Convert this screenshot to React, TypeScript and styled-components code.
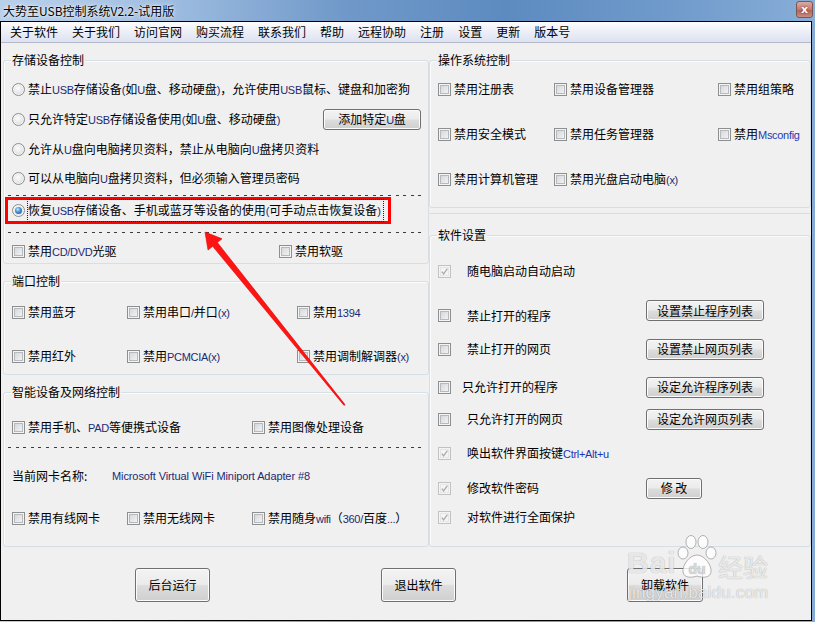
import React from "react";
import styled, { createGlobalStyle } from "styled-components";

const Global = createGlobalStyle`
  html, body { margin: 0; padding: 0; background: #7ea6d2; }
  body {
    font-family: "Noto Sans CJK SC", "Noto Sans", sans-serif;
    font-size: 12px;
    color: #000;
  }
  * { box-sizing: border-box; }
`;

const Window = styled.div`
  position: relative;
  width: 815px;
  height: 622px;
  display: flex;
  flex-direction: column;
  overflow: hidden;
  background: linear-gradient(90deg, #b7cfe9, #6d97c8 50%, #86acd6);
`;

const TitleBar = styled.div`
  height: 21px;
  flex: none;
  display: flex;
  align-items: center;
  padding-left: 3px;
  background: linear-gradient(
    90deg,
    #b9d0ea 0%,
    #a4c1e3 18%,
    #7099c9 42%,
    #5d8bc0 62%,
    #6f9acb 82%,
    #88aed8 100%
  );
`;

const Title = styled.span`
  font-size: 12px;
  line-height: 16px;
  text-shadow: 0 0 5px rgba(255, 255, 255, 0.9), 0 0 2px rgba(255, 255, 255, 0.9);
`;

const CloseBtn = styled.div`
  margin-left: auto;
  margin-right: 2px;
  align-self: flex-start;
  margin-top: 1px;
  width: 17px;
  height: 17px;
  border: 1px solid #7b5550;
  border-radius: 3px;
  background: linear-gradient(#dcaaa2, #c57a70 50%, #b25d52 51%, #c98c82);
  display: flex;
  align-items: center;
  justify-content: center;
  color: #fff;
  font: bold 11px "DejaVu Sans", sans-serif;
  text-shadow: 0 0 2px #5a2a25;
`;

const Client = styled.div`
  position: relative;
  flex: none;
  width: 812px;
  height: 600px;
  border: 1px solid #000;
  background: #f0f0f0;
  display: flex;
  flex-direction: column;
`;

const MenuBar = styled.div`
  flex: none;
  height: 21px;
  display: flex;
  align-items: center;
  padding-left: 2px;
  background: linear-gradient(#fdfdfe, #eef0f8 45%, #dde2f1);
  border-bottom: 1px solid #b4b9c9;
`;

const MenuItem = styled.span`
  padding: 0 7px;
  line-height: 16px;
`;

const Columns = styled.div`
  display: grid;
  grid-template-columns: 428px 382px;
`;

const Column = styled.div<{ $pl: number }>`
  display: flex;
  flex-direction: column;
  padding-top: 17px;
  padding-left: ${(p) => p.$pl}px;
`;

const Group = styled.div<{ $mt?: number; $pt: number; $pb: number }>`
  position: relative;
  margin-top: ${(p) => p.$mt ?? 0}px;
  border: 1px solid #d5dfe5;
  border-radius: 3px;
  box-shadow: inset 1px 1px 0 #fbfbfb;
  padding: ${(p) => p.$pt}px 3px ${(p) => p.$pb}px 8px;
  display: flex;
  flex-direction: column;
`;

const Legend = styled.span`
  position: absolute;
  top: -9px;
  left: 7px;
  padding: 0 1px;
  line-height: 16px;
  background: #f0f0f0;
`;

const Separator = styled.div`
  margin-top: 5px;
  height: 1px;
  background: #d5dfe5;
`;

const Dashed = styled.div<{ $mt: number }>`
  margin: ${(p) => p.$mt}px 0 0 -4px;
  height: 1px;
  background: repeating-linear-gradient(90deg, #3c3c3c 0 3px, transparent 3px 7.6px);
`;

const Row = styled.div<{ $h?: number; $mt?: number }>`
  height: ${(p) => p.$h ?? 22}px;
  margin-top: ${(p) => p.$mt ?? 0}px;
  display: flex;
  align-items: center;
  gap: 3px;
`;

const GridRow = styled.div<{ $cols: string; $mt?: number }>`
  height: 22px;
  margin-top: ${(p) => p.$mt ?? 0}px;
  display: grid;
  grid-template-columns: ${(p) => p.$cols};
  align-items: center;
`;

const Text = styled.span`
  line-height: 16px;
  white-space: nowrap;
`;

const L = styled.span<{ $c?: string }>`
  font-family: "Liberation Sans", Arial, sans-serif;
  font-size: 11px;
  letter-spacing: -0.3px;
  color: ${(p) => p.$c ?? "#1d2a72"};
`;

const Button = styled.button<{ $w: number; $h: number; $shift?: number }>`
  flex: none;
  width: ${(p) => p.$w}px;
  height: ${(p) => p.$h}px;
  margin-bottom: ${(p) => (p.$shift ?? 0) * 2}px;
  padding: 0;
  border: 1px solid #707070;
  border-radius: 3px;
  background: linear-gradient(#f3f3f3 0%, #ebebeb 48%, #dddddd 52%, #cfcfcf 100%);
  box-shadow: inset 0 0 0 1px #fbfbfb;
  font-family: "Noto Sans CJK SC", sans-serif;
  font-size: 12px;
  line-height: 16px;
  color: #000;
  white-space: nowrap;
`;

const RadioDot = styled.span<{ $on?: boolean }>`
  flex: none;
  width: 13px;
  height: 13px;
  border-radius: 50%;
  border: 1px solid #8e8f8f;
  background: radial-gradient(circle at 45% 40%, #fdfdfd 0, #e4e5e7 55%, #c9cacd 100%);
  box-shadow: inset 0 0 0 1px #f6f6f6;
  display: inline-flex;
  align-items: center;
  justify-content: center;
  &::after {
    content: "";
    display: ${(p) => (p.$on ? "block" : "none")};
    width: 7px;
    height: 7px;
    border-radius: 50%;
    background: radial-gradient(circle at 40% 35%, #cde9fd 0, #4a96dc 40%, #174c8e 100%);
  }
`;

const Box = styled.span<{ $disabled?: boolean }>`
  flex: none;
  width: 13px;
  height: 13px;
  border: 1px solid ${(p) => (p.$disabled ? "#c2c2c2" : "#8e8f8f")};
  background: ${(p) =>
    p.$disabled ? "#f4f4f4" : "linear-gradient(135deg, #cfd1d4, #f9f9f9)"};
  box-shadow: inset 0 0 0 1px #f4f4f4,
    inset 0 0 0 2px ${(p) => (p.$disabled ? "#e6e6e6" : "#b6b9bd")};
  display: inline-flex;
  align-items: center;
  justify-content: center;
`;

const FocusText = styled.span`
  border: 1px dotted #222;
  padding: 1px 2px 1px 0;
  line-height: 17px;
  white-space: nowrap;
`;

const Highlight = styled.div`
  margin: 1px 0 0 -7px;
  width: 386px;
  height: 27px;
  border: 3px solid #ff0000;
  display: flex;
  align-items: center;
  gap: 2px;
  padding-left: 4px;
`;

const NetLabel = styled.span`
  width: 97px;
  flex: none;
  line-height: 16px;
`;

const NetValue = styled.span`
  font-family: "Liberation Sans", Arial, sans-serif;
  font-size: 11px;
  letter-spacing: -0.1px;
  color: #1d2a72;
`;

const Label = styled.span<{ $shift?: number }>`
  margin-left: ${(p) => p.$shift ?? 0}px;
  line-height: 16px;
  white-space: nowrap;
`;

const BottomBar = styled.div`
  display: flex;
  padding: 21px 0 0 134px;
  gap: 171px;
`;

const Overlay = styled.svg`
  position: absolute;
  left: 0;
  top: 0;
  pointer-events: none;
`;

const Watermark = styled.div`
  position: absolute;
  left: 625px;
  top: 534px;
  width: 150px;
  height: 70px;
  pointer-events: none;
  color: rgba(255, 255, 255, 0.8);
  text-shadow: 0 0 1px rgba(0, 0, 0, 0.4);
`;

const WmBai = styled.span`
  position: absolute;
  left: 2px;
  top: 14px;
  font: bold 30px "Liberation Sans", Arial, sans-serif;
  line-height: 30px;
  letter-spacing: 1px;
`;

const WmJy = styled.span`
  position: absolute;
  left: 93px;
  top: 18px;
  font: 25px "Noto Sans CJK SC", sans-serif;
  line-height: 28px;
`;

const WmUrl = styled.span`
  position: absolute;
  left: 3px;
  top: 49px;
  font: 17px "Liberation Sans", Arial, sans-serif;
  line-height: 19px;
  letter-spacing: 0.2px;
`;

const WmPaw = styled.svg`
  position: absolute;
  left: 49px;
  top: 0;
`;

const CheckBox = ({ checked, disabled }: { checked?: boolean; disabled?: boolean }) => (
  <Box $disabled={disabled}>
    {checked && (
      <svg width="9" height="9" viewBox="0 0 9 9">
        <path d="M1.8 4.6 L3.6 6.9 L7.4 1.6" stroke="#a9a9a9" strokeWidth="1.2" fill="none" />
      </svg>
    )}
  </Box>
);

const Check = ({
  children,
  checked,
  disabled,
}: {
  children: React.ReactNode;
  checked?: boolean;
  disabled?: boolean;
}) => (
  <Row>
    <CheckBox checked={checked} disabled={disabled} />
    <Text>{children}</Text>
  </Row>
);

const menus = ["关于软件", "关于我们", "访问官网", "购买流程", "联系我们", "帮助", "远程协助", "注册", "设置", "更新", "版本号"];

type SoftRow = {
  mt: number;
  checked: boolean;
  label: React.ReactNode;
  shift?: number;
  button?: { text: React.ReactNode; w: number; shift?: number };
};

const softRows: SoftRow[] = [
  { mt: 0, checked: true, label: "随电脑启动自动启动" },
  { mt: 18, checked: false, label: "禁止打开的程序", button: { text: "设置禁止程序列表", w: 118, shift: 5 } },
  { mt: 16, checked: false, label: "禁止打开的网页", button: { text: "设置禁止网页列表", w: 118 } },
  { mt: 16, checked: false, label: "只允许打开的程序", shift: -5, button: { text: "设定允许程序列表", w: 118 } },
  { mt: 10, checked: false, label: "只允许打开的网页", button: { text: "设定允许网页列表", w: 118 } },
  {
    mt: 12,
    checked: true,
    label: (
      <>
        唤出软件界面按键<L $c="#2236b0">Ctrl+Alt+u</L>
      </>
    ),
  },
  { mt: 13, checked: true, label: "修改软件密码", button: { text: "修 改", w: 56 } },
  { mt: 7, checked: true, label: "对软件进行全面保护" },
];

// red annotation arrow (window coordinates)
const tip = [205, 232];
const tail = [344.5, 405];
const arrowPoints = (() => {
  const dx = tail[0] - tip[0];
  const dy = tail[1] - tip[1];
  const len = Math.hypot(dx, dy);
  const ux = dx / len;
  const uy = dy / len;
  const px = uy;
  const py = -ux;
  const base = [tip[0] + ux * 16, tip[1] + uy * 16];
  const pts = [
    tip,
    [base[0] + px * 9, base[1] + py * 9],
    [base[0] + px * 3, base[1] + py * 3],
    [tail[0] + px * 0.6, tail[1] + py * 0.6],
    [tail[0] - px * 0.6, tail[1] - py * 0.6],
    [base[0] - px * 3, base[1] - py * 3],
    [base[0] - px * 9, base[1] - py * 9],
  ];
  return pts.map((p) => p.map((v) => v.toFixed(1)).join(",")).join(" ");
})();

export default function App() {
  return (
    <>
      <Global />
      <Window>
        <TitleBar>
          <Title>大势至USB控制系统V2.2-试用版</Title>
          <CloseBtn>x</CloseBtn>
        </TitleBar>
        <Client>
          <MenuBar>
            {menus.map((m) => (
              <MenuItem key={m}>{m}</MenuItem>
            ))}
          </MenuBar>
          <Columns>
            <Column $pl={2}>
              <Group $pt={13} $pb={1}>
                <Legend>存储设备控制</Legend>
                <Row $h={30}>
                  <RadioDot />
                  <Text>
                    禁止<L>USB</L>存储设备<L>(</L>如<L>U</L>盘、移动硬盘<L>)</L>，允许使用<L>USB</L>鼠标、键盘和加密狗
                  </Text>
                </Row>
                <Row $h={30}>
                  <RadioDot />
                  <Text>
                    只允许特定<L>USB</L>存储设备使用<L>(</L>如<L>U</L>盘、移动硬盘<L>)</L>
                  </Text>
                  <Button $w={98} $h={21} style={{ marginLeft: "auto", marginRight: 4 }}>
                    添加特定<L>U</L>盘
                  </Button>
                </Row>
                <Row $h={31}>
                  <RadioDot />
                  <Text>
                    允许从<L>U</L>盘向电脑拷贝资料，禁止从电脑向<L>U</L>盘拷贝资料
                  </Text>
                </Row>
                <Row $h={26}>
                  <RadioDot />
                  <Text>
                    可以从电脑向<L>U</L>盘拷贝资料，但必须输入管理员密码
                  </Text>
                </Row>
                <Dashed $mt={4} />
                <Highlight>
                  <RadioDot $on />
                  <FocusText>
                    恢复<L>USB</L>存储设备、手机或蓝牙等设备的使用<L>(</L>可手动点击恢复设备<L>)</L>
                  </FocusText>
                </Highlight>
                <Dashed $mt={8} />
                <GridRow $cols="267px auto" $mt={7}>
                  <Check>
                    禁用<L>CD/DVD</L>光驱
                  </Check>
                  <Check>禁用软驱</Check>
                </GridRow>
              </Group>

              <Group $mt={17} $pt={19} $pb={7}>
                <Legend>端口控制</Legend>
                <GridRow $cols="115px 170px auto">
                  <Check>禁用蓝牙</Check>
                  <Check>
                    禁用串口<L>/</L>并口<L>(x)</L>
                  </Check>
                  <Check>
                    禁用<L>1394</L>
                  </Check>
                </GridRow>
                <GridRow $cols="115px 170px auto" $mt={22}>
                  <Check>禁用红外</Check>
                  <Check>
                    禁用<L>PCMCIA(x)</L>
                  </Check>
                  <Check>
                    禁用调制解调器<L>(x)</L>
                  </Check>
                </GridRow>
              </Group>

              <Group $mt={17} $pt={23} $pb={17}>
                <Legend>智能设备及网络控制</Legend>
                <GridRow $cols="240px auto">
                  <Check>
                    禁用手机、<L>PAD</L>等便携式设备
                  </Check>
                  <Check>禁用图像处理设备</Check>
                </GridRow>
                <Dashed $mt={9} />
                <Row $mt={17}>
                  <NetLabel>当前网卡名称:</NetLabel>
                  <NetValue>Microsoft Virtual WiFi Miniport Adapter #8</NetValue>
                </Row>
                <GridRow $cols="115px 125px auto" $mt={20}>
                  <Check>禁用有线网卡</Check>
                  <Check>禁用无线网卡</Check>
                  <Check>
                    禁用随身<L>wifi</L>（<L>360/</L>百度<L>...</L>）
                  </Check>
                </GridRow>
              </Group>
            </Column>

            <Column $pl={0}>
              <Group $pt={17} $pb={17}>
                <Legend>操作系统控制</Legend>
                <GridRow $cols="116px 164px auto">
                  <Check>禁用注册表</Check>
                  <Check>禁用设备管理器</Check>
                  <Check>禁用组策略</Check>
                </GridRow>
                <GridRow $cols="116px 164px auto" $mt={23}>
                  <Check>禁用安全模式</Check>
                  <Check>禁用任务管理器</Check>
                  <Check>
                    禁用<L $c="#1f3bb0">Msconfig</L>
                  </Check>
                </GridRow>
                <GridRow $cols="116px 164px auto" $mt={23}>
                  <Check>禁用计算机管理</Check>
                  <Check>
                    禁用光盘启动电脑<L>(x)</L>
                  </Check>
                </GridRow>
              </Group>
              <Separator />
              <Group $mt={21} $pt={24} $pb={18}>
                <Legend>软件设置</Legend>
                {softRows.map((r, i) => (
                  <GridRow key={i} $cols="29px 179px auto" $mt={r.mt}>
                    <CheckBox checked={r.checked} disabled={r.checked} />
                    <Label $shift={r.shift}>{r.label}</Label>
                    {r.button ? (
                      <Button $w={r.button.w} $h={21} $shift={r.button.shift}>
                        {r.button.text}
                      </Button>
                    ) : (
                      <span />
                    )}
                  </GridRow>
                ))}
              </Group>
            </Column>
          </Columns>
          <BottomBar>
            <Button $w={75} $h={34}>后台运行</Button>
            <Button $w={75} $h={34}>退出软件</Button>
            <Button $w={76} $h={34}>卸载软件</Button>
          </BottomBar>
        </Client>

        <Overlay width="815" height="622" viewBox="0 0 815 622">
          <polygon points={arrowPoints} fill="#ff1414" stroke="#e00000" strokeWidth="0.6" strokeLinejoin="round" />
        </Overlay>

        <Watermark>
          <WmBai>Bai</WmBai>
          <WmPaw width="46" height="46" viewBox="0 0 46 46">
            <g fill="rgba(255,255,255,0.8)" stroke="rgba(110,110,110,0.5)" strokeWidth="1">
              <ellipse cx="9" cy="19" rx="5" ry="6" />
              <ellipse cx="17" cy="8" rx="5" ry="6.5" />
              <ellipse cx="29" cy="8" rx="5" ry="6.5" />
              <ellipse cx="37" cy="19" rx="5" ry="6" />
              <path d="M23 21 C15 21 8 32 9 38 C10 44 17 44 23 42 C29 44 36 44 37 38 C38 32 31 21 23 21 Z" />
            </g>
            <text
              x="23"
              y="40"
              textAnchor="middle"
              fontFamily="Liberation Sans, Arial, sans-serif"
              fontWeight="bold"
              fontSize="14"
              fill="#d9d9d9"
            >
              du
            </text>
          </WmPaw>
          <WmJy>经验</WmJy>
          <WmUrl>jingyan.baidu.com</WmUrl>
        </Watermark>
      </Window>
    </>
  );
}
